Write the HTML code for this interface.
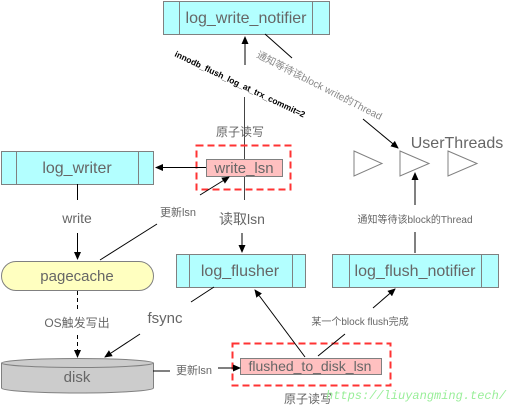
<!DOCTYPE html>
<html><head><meta charset="utf-8"><style>
html,body{margin:0;padding:0;background:#fff;}
svg{display:block;}
text{font-family:"Liberation Sans","Noto Sans CJK SC",sans-serif;}
</style></head><body>
<svg width="509" height="413" viewBox="0 0 509 413" xmlns="http://www.w3.org/2000/svg">
<defs>
<marker id="a" markerWidth="8" markerHeight="8" refX="7" refY="4" orient="auto" markerUnits="userSpaceOnUse"><path d="M0,0.5 L8,4 L0,7.5 Z" fill="#000"/></marker>
</defs>
<line x1="244.5" y1="97" x2="244.5" y2="200" stroke="#444"/>
<g stroke="#808080" stroke-width="1" fill="#b3ffff">
<rect x="163.5" y="1.5" width="166" height="33"/><line x1="179.5" y1="1.5" x2="179.5" y2="34.5"/><line x1="312.5" y1="1.5" x2="312.5" y2="34.5"/>
<rect x="1.5" y="151.5" width="152" height="33"/><line x1="16.5" y1="151.5" x2="16.5" y2="184.5"/><line x1="138.5" y1="151.5" x2="138.5" y2="184.5"/>
<rect x="176.5" y="254.5" width="129" height="33"/><line x1="189.5" y1="254.5" x2="189.5" y2="287.5"/><line x1="292.5" y1="254.5" x2="292.5" y2="287.5"/>
<rect x="332.5" y="254.5" width="166" height="33"/><line x1="349.5" y1="254.5" x2="349.5" y2="287.5"/><line x1="481.5" y1="254.5" x2="481.5" y2="287.5"/>
</g>
<rect x="1.5" y="261.5" width="152" height="29" rx="14.5" fill="#ffffc0" stroke="#808080"/>
<path d="M1.5,363 L1.5,388 A76,5 0 0 0 153.5,388 L153.5,363" fill="#cccccc" stroke="#808080"/>
<ellipse cx="77.5" cy="363" rx="76" ry="4.5" fill="#cccccc" stroke="#808080"/>
<rect x="196.5" y="145.5" width="94" height="44" fill="none" stroke="#ff3333" stroke-width="2" stroke-dasharray="7,4"/>
<rect x="206.5" y="159.5" width="76" height="17" fill="#ffc0c0" stroke="#808080"/>
<rect x="232.5" y="343.5" width="158" height="42" fill="none" stroke="#ff3333" stroke-width="2" stroke-dasharray="7,4"/>
<rect x="240.5" y="358.5" width="141" height="16" fill="#ffc0c0" stroke="#808080"/>
<g fill="#fff" stroke="#808080">
<path d="M354,151 L382,163.5 L354,176 Z"/><path d="M400,151 L429,163.5 L400,176 Z"/><path d="M448,151 L477,163.5 L448,176 Z"/>
</g>
<g stroke="#000" stroke-width="1" fill="none">
<line x1="245" y1="65" x2="245" y2="37" marker-end="url(#a)"/>
<line x1="242" y1="233" x2="242" y2="252" marker-end="url(#a)"/>
<line x1="206" y1="167.5" x2="156" y2="167.5" marker-end="url(#a)"/>
<line x1="200" y1="195" x2="229" y2="177" marker-end="url(#a)"/>
<line x1="77.5" y1="184" x2="77.5" y2="200"/>
<line x1="77.5" y1="233" x2="77.5" y2="259" marker-end="url(#a)"/>
<line x1="100" y1="260" x2="157" y2="224"/>
<line x1="265" y1="34" x2="292" y2="58"/>
<line x1="363" y1="119" x2="398" y2="148" marker-end="url(#a)"/>
<line x1="415" y1="205" x2="415" y2="173" marker-end="url(#a)"/>
<line x1="415" y1="232" x2="415" y2="253"/>
<line x1="214" y1="287" x2="191" y2="302"/>
<line x1="140" y1="334" x2="105" y2="357" marker-end="url(#a)"/>
<line x1="77.5" y1="291" x2="77.5" y2="310" stroke-dasharray="4,3"/>
<line x1="77.5" y1="335" x2="77.5" y2="357" stroke-dasharray="4,3" marker-end="url(#a)"/>
<line x1="153" y1="371" x2="170" y2="371"/>
<line x1="218" y1="368" x2="240" y2="368" marker-end="url(#a)"/>
<line x1="305" y1="357" x2="255" y2="290" marker-end="url(#a)"/>
<line x1="318" y1="356" x2="345" y2="334"/>
<line x1="373" y1="308" x2="395" y2="289" marker-end="url(#a)"/>
</g>
<g fill="#666" text-anchor="middle">
<text x="246" y="23" font-size="16">log_write_notifier</text>
<text x="77" y="173" font-size="16">log_writer</text>
<text x="244" y="173" font-size="15">write_lsn</text>
<text x="240" y="276" font-size="16">log_flusher</text>
<text x="415" y="276" font-size="16">log_flush_notifier</text>
<text x="77" y="281" font-size="15">pagecache</text>
<text x="77" y="382" font-size="15">disk</text>
<text x="310" y="371" font-size="14">flushed_to_disk_lsn</text>
<text x="240" y="136" font-size="12">原子读写</text>
<text x="308" y="403" font-size="12">原子读写</text>
<text x="77" y="223" font-size="14">write</text>
<text x="242" y="224" font-size="14">读取lsn</text>
<text x="178" y="216" font-size="11">更新lsn</text>
<text x="194" y="374" font-size="11">更新lsn</text>
<text x="165" y="323" font-size="15">fsync</text>
<text x="77" y="327" font-size="12">OS触发写出</text>
<text x="457" y="148" font-size="16">UserThreads</text>
<text x="415" y="223" font-size="10">通知等待该block的Thread</text>
<text x="360" y="325" font-size="10">某一个block flush完成</text>
</g>
<text x="174" y="56" font-size="8.5" font-weight="bold" fill="#000" transform="rotate(25.5 174 56)">innodb_flush_log_at_trx_commit=2</text>
<text x="256" y="57" font-size="10" fill="#888" transform="rotate(27 256 57)">通知等待该block write的Thread</text>
<text x="326" y="399" font-size="12" font-style="italic" fill="#99ee99" style="font-family:'Liberation Mono',monospace">https://liuyangming.tech/</text>
</svg>
</body></html>
